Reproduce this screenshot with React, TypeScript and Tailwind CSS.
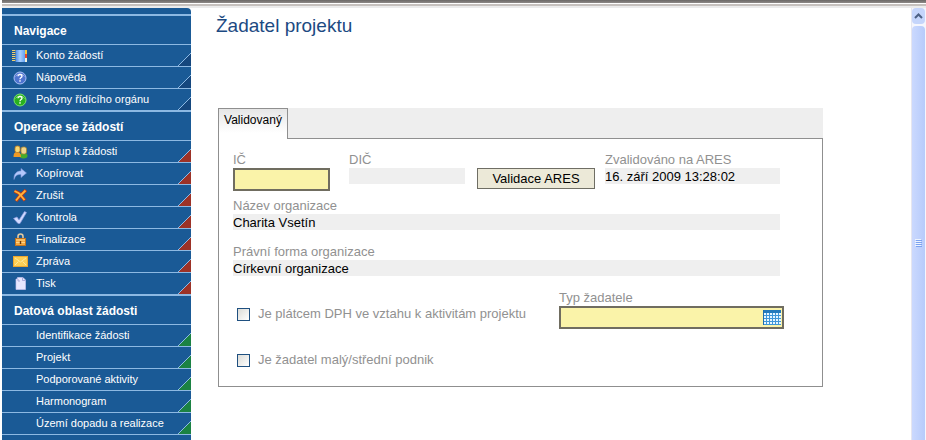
import type { ReactNode } from "react";

type NavItem = { label: string; icon?: ReactNode };
type NavGroup = { title: string; corner: string; items: NavItem[] };

function NotebookIcon() {
  return (
    <svg width="16" height="14" viewBox="0 0 16 14" aria-hidden="true">
      <defs>
        <linearGradient id="cover" x1="0" x2="1" y1="0" y2="0">
          <stop offset="0" stopColor="#3f86ea" />
          <stop offset="0.5" stopColor="#a9cfff" />
          <stop offset="1" stopColor="#5ea0f4" />
        </linearGradient>
      </defs>
      <rect x="3" y="1" width="10" height="12" fill="url(#cover)" />
      <path d="M0 1.5h4M0 3.5h4M0 5.5h4M0 7.5h4M0 9.5h4M0 11.500h4" stroke="#f0d070" />
      <path d="M3.5 1v12" stroke="#2d5f9c" strokeOpacity="0.6" />
      <rect x="13" y="1" width="2" height="4" fill="#f5c93c" />
      <rect x="13" y="5" width="2" height="4" fill="#e8452c" />
      <rect x="13" y="9" width="2" height="4" fill="#f1f1dc" />
    </svg>
  );
}

function HelpIcon({ fill, edge }: { fill: string; edge: string }) {
  return (
    <svg width="14" height="14" viewBox="0 0 14 14" aria-hidden="true">
      <circle cx="7" cy="7" r="6" fill={fill} stroke={edge} />
      <path d="M2.5 5.5a5 4.5 0 0 1 9 0" fill="none" stroke="#fff" strokeOpacity="0.4" />
      <path d="M5 5.2c0-2.3 4-2.2 4 0C9 6.6 7 6.5 7 8.3" fill="none" stroke="#fff" strokeWidth="1.3" />
      <rect x="6.3" y="9.2" width="1.4" height="1.5" fill="#fff" />
    </svg>
  );
}

function UsersIcon() {
  return (
    <svg width="15" height="14" viewBox="0 0 15 14" aria-hidden="true">
      <ellipse cx="10.5" cy="10.8" rx="4" ry="2.7" fill="#46ab2b" />
      <rect x="8" y="2" width="5.5" height="7" rx="2" fill="#f0d48c" stroke="#a8852c" strokeWidth="0.8" />
      <path d="M0.5 12c0-4 1.5-5 3.5-5s4 1 4 5z" fill="#f09a25" />
      <rect x="2" y="1" width="5" height="6.5" rx="2" fill="#f7d873" stroke="#c07a1a" strokeWidth="0.8" />
    </svg>
  );
}

function CopyArrowIcon() {
  return (
    <svg width="14" height="12" viewBox="0 0 14 12" aria-hidden="true">
      <path d="M1 11.5C0.5 5.5 4 3 8 3V0.5L13.5 5 8 9.5V6.5C4.5 6.3 2.3 7.5 1 11.500z" fill="#b3c7fa" stroke="#7f97dc" strokeWidth="0.6" />
    </svg>
  );
}

function DeleteIcon() {
  return (
    <svg width="14" height="13" viewBox="0 0 14 13" aria-hidden="true">
      <path d="M1.5 2l4 2L8 6l5-5M7.5 6L3 12M7 5.500l5 6" fill="none" stroke="#c23a14" strokeWidth="3.4" />
      <path d="M1.5 2l4 2L8 6l4.500-4.500M7.5 6L3 11.5M7 5.500l4.500 5.500" fill="none" stroke="#ffb43a" strokeWidth="1.8" />
    </svg>
  );
}

function CheckIcon() {
  return (
    <svg width="14" height="13" viewBox="0 0 14 13" aria-hidden="true">
      <path d="M0.5 7.5L4 6l2 3L11.5 0.5l2 1L7 12.5H5z" fill="#d0daff" stroke="#8b9be0" strokeWidth="0.7" />
    </svg>
  );
}

function LockIcon() {
  return (
    <svg width="11" height="13" viewBox="0 0 11 13" aria-hidden="true">
      <path d="M3 6V3.500a2.500 2.500 0 0 1 5 0V6" fill="none" stroke="#e2c9a0" strokeWidth="1.6" />
      <rect x="0.5" y="5.5" width="10" height="7" fill="#f6a940" stroke="#c27420" />
      <path d="M1 7h9M1 9.500h9" stroke="#ffd487" />
      <path d="M5.5 8v3" stroke="#6e3b0b" strokeWidth="1.4" />
    </svg>
  );
}

function MailIcon() {
  return (
    <svg width="15" height="11" viewBox="0 0 15 11" aria-hidden="true">
      <rect x="0.5" y="0.5" width="14" height="10" fill="#fdcf55" stroke="#eda730" />
      <path d="M2 2l5.5 4L13 2M2 9l3.500-3.500M13 9L9.500 5.500" fill="none" stroke="#ffe79a" />
    </svg>
  );
}

function PageIcon() {
  return (
    <svg width="11" height="13" viewBox="0 0 11 13" aria-hidden="true">
      <path d="M1 2h1.500V0.500H8L10.500 3v9.500H1z" fill="#e7e7ff" stroke="#c4c4f0" strokeWidth="0.7" />
      <path d="M3 2v2h2M7.500 0.500V3.500h3" fill="none" stroke="#9c9cd0" strokeWidth="0.8" />
    </svg>
  );
}

function TableIcon() {
  return (
    <svg width="18" height="15" viewBox="0 0 18 15" aria-hidden="true">
      <rect width="18" height="15" fill="#e6f6ff" />
      <path d="M0 5.5h18M0 8.5h18M0 11.5h18M0 14.5h18M3.5 3v12M6.5 3v12M9.5 3v12M12.5 3v12M15.5 3v12" stroke="#3f96d8" />
      <rect width="18" height="3" fill="#2379bb" />
      <path d="M0.5 0v15" stroke="#1f6dab" />
    </svg>
  );
}

const groups: NavGroup[] = [
  {
    title: "Navigace",
    corner: "#15477e",
    items: [
      { label: "Konto žádostí", icon: <NotebookIcon /> },
      { label: "Nápověda", icon: <HelpIcon fill="#4f74cf" edge="#a9c0f5" /> },
      { label: "Pokyny řídícího orgánu", icon: <HelpIcon fill="#28b01e" edge="#7be36a" /> },
    ],
  },
  {
    title: "Operace se žádostí",
    corner: "#9c3227",
    items: [
      { label: "Přístup k žádosti", icon: <UsersIcon /> },
      { label: "Kopírovat", icon: <CopyArrowIcon /> },
      { label: "Zrušit", icon: <DeleteIcon /> },
      { label: "Kontrola", icon: <CheckIcon /> },
      { label: "Finalizace", icon: <LockIcon /> },
      { label: "Zpráva", icon: <MailIcon /> },
      { label: "Tisk", icon: <PageIcon /> },
    ],
  },
  {
    title: "Datová oblast žádosti",
    corner: "#1b8243",
    items: [
      { label: "Identifikace žádosti" },
      { label: "Projekt" },
      { label: "Podporované aktivity" },
      { label: "Harmonogram" },
      { label: "Území dopadu a realizace" },
    ],
  },
];

function Sidebar() {
  return (
    <nav className="w-[189px] shrink-0 rounded-tr bg-[#1a5a96] pt-1.5 text-white">
      {groups.map((group) => (
        <section key={group.title} className="border-t-2 border-[#8db9e3]">
          <h2 className="border-b border-[#8db9e3] pt-0.5 pl-3 text-[12px] leading-[26px] font-bold">
            {group.title}
          </h2>
          <ul className="divide-y divide-[#8db9e3]">
            {group.items.map((item) => (
              <li key={item.label}>
                <a href="#" className="flex h-[21px] items-center pl-2.5 text-[11px]">
                  <span className="flex w-6 shrink-0">
                    <span className="flex w-4 justify-center">{item.icon}</span>
                  </span>
                  <span className="whitespace-nowrap">{item.label}</span>
                  <svg className="ml-auto shrink-0 self-end" width="13" height="13" viewBox="0 0 13 13" aria-hidden="true">
                    <path d="M0 13L13 0v13z" fill={group.corner} />
                    <path d="M0 13L13 0" stroke="#8db9e3" />
                  </svg>
                </a>
              </li>
            ))}
          </ul>
        </section>
      ))}
      <div className="border-t border-[#8db9e3]" />
    </nav>
  );
}

function ReadOnlyField({ id, label, value, className }: { id: string; label: string; value: string; className: string }) {
  return (
    <div className={className}>
      <label htmlFor={id} className="block leading-4 text-[#919191]">
        {label}
      </label>
      <input id={id} readOnly value={value} className="block h-4 w-full bg-[#efefef] pt-0.5 text-black outline-none" />
    </div>
  );
}

function CheckField({ id, label }: { id: string; label: string }) {
  return (
    <div className="flex h-5 items-center gap-2">
      <input
        id={id}
        type="checkbox"
        className="size-[13px] appearance-none border border-[#1f5080] bg-linear-to-br from-[#dcdcd7] to-white checked:bg-[#1f5080]"
      />
      <label htmlFor={id} className="text-[#919191]">
        {label}
      </label>
    </div>
  );
}

function ApplicantForm() {
  return (
    <div className="mt-[70px] mr-[88px] ml-[27px]">
      <div className="flex h-[31px]" role="tablist">
        <button
          type="button"
          role="tab"
          aria-selected="true"
          className="w-[70px] border-x border-t border-[#8f8f8f] bg-linear-to-b from-[#e6e6e6] to-white to-80% pb-2 text-center text-[12px] text-black"
        >
          Validovaný
        </button>
        <div className="flex-1 border-b border-[#8f8f8f] bg-[#eeeeee]" />
      </div>

      <form className="border-x border-b border-[#8f8f8f] pt-[13px] pr-[38px] pb-4 pl-3.5 text-[13px]">
        <div className="mr-1 flex items-start">
          <div className="w-[97px]">
            <label htmlFor="ic" className="block leading-4 text-[#919191]">
              IČ
            </label>
            <input id="ic" className="block h-[23px] w-full border-2 border-[#706d60] bg-[#faf3a9] px-1 outline-none" />
          </div>
          <ReadOnlyField id="dic" label="DIČ" value="" className="ml-[19px] w-[116px]" />
          <button
            type="button"
            className="mt-4 ml-3 h-[21px] w-[118px] border border-[#6f6e64] bg-[#ece9d8] leading-4 text-black"
          >
            Validace ARES
          </button>
          <ReadOnlyField id="ares" label="Zvalidováno na ARES" value="16. září 2009 13:28:02" className="ml-2.5 min-w-0 flex-1" />
        </div>

        <ReadOnlyField id="name" label="Název organizace" value="Charita Vsetín" className="mt-[7px] mr-1" />
        <ReadOnlyField id="legal" label="Právní forma organizace" value="Církevní organizace" className="mt-3.5 mr-1" />

        <div className="mt-3.5 flex items-start justify-between">
          <div className="flex flex-col gap-[26px] pt-3.5 pl-1">
            <CheckField id="dph" label="Je plátcem DPH ve vztahu k aktivitám projektu" />
            <CheckField id="sme" label="Je žadatel malý/střední podnik" />
          </div>
          <div className="w-[225px]">
            <label htmlFor="type" className="block leading-4 text-[#919191]">
              Typ žadatele
            </label>
            <div className="flex h-[23px] items-center border-2 border-[#706d60] bg-[#faf3a9] pr-px">
              <input id="type" className="h-full min-w-0 flex-1 px-1 outline-none" />
              <button type="button" aria-label="Vybrat typ žadatele">
                <TableIcon />
              </button>
            </div>
          </div>
        </div>
      </form>
    </div>
  );
}

function Scrollbar() {
  return (
    <div className="flex w-[15px] shrink-0 flex-col gap-0.5 border-l border-[#e6e6f0] bg-[#f5f6fd] pr-px">
      <button type="button" aria-label="Nahoru" className="flex h-4 items-center justify-center rounded-sm bg-[#c5d5fb]">
        <svg width="9" height="6" viewBox="0 0 9 6" aria-hidden="true">
          <path d="M1 5l3.5-3.5L8 5" fill="none" stroke="#4d6185" strokeWidth="2" />
        </svg>
      </button>
      <div className="flex flex-1 items-center justify-center rounded-t-sm bg-linear-to-r from-[#cbd9fe] to-[#b7cbfb] pt-5">
        <svg width="7" height="8" viewBox="0 0 7 8" aria-hidden="true">
          <path d="M0 0.5h6M0 2.5h6M0 4.5h6M0 6.5h6" stroke="#eef4fe" />
          <path d="M1 1.5h6M1 3.5h6M1 5.5h6M1 7.5h6" stroke="#7ba2f0" />
        </svg>
      </div>
    </div>
  );
}

export default function App() {
  return (
    <div className="flex min-h-screen flex-col bg-white pl-0.5 font-['Liberation_Sans',Arial,sans-serif]">
      <div className="h-[3px] bg-linear-to-b from-[#6b6866] to-[#8d8987]" />
      <div className="mt-px h-0.5 bg-[#c6c1be]" />
      <div className="h-0.5 bg-[#ececec]" />
      <div className="flex flex-1">
        <Sidebar />
        <main className="min-w-0 flex-1">
          <h1 className="pt-1.5 pl-[25px] text-[19px] leading-6 text-[#1c4a82]">Žadatel projektu</h1>
          <ApplicantForm />
        </main>
        <Scrollbar />
      </div>
    </div>
  );
}
